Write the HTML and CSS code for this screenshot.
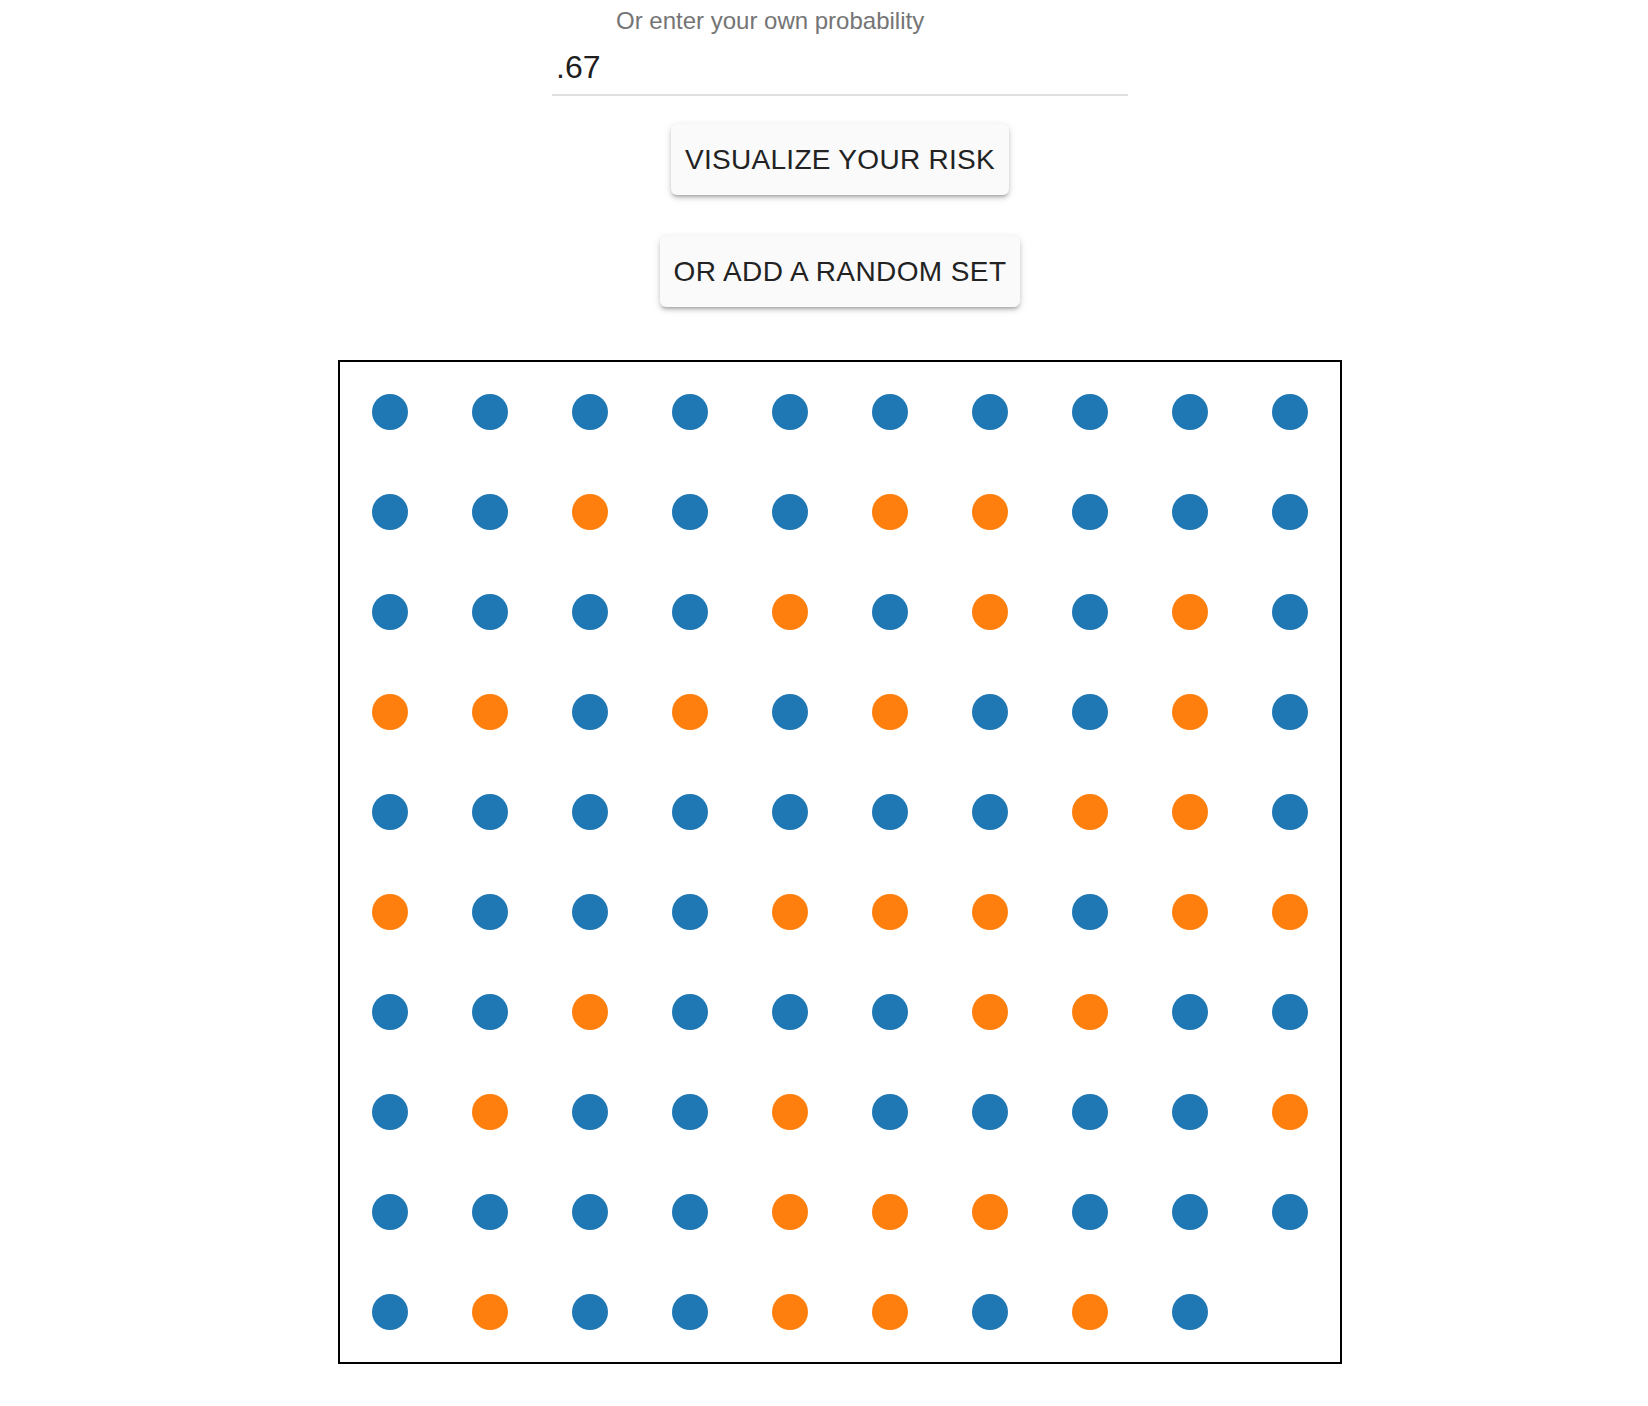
FILE: index.html
```html
<!DOCTYPE html>
<html>
<head>
<meta charset="utf-8">
<link rel="stylesheet" href="styles.css">
</head>
<body>
<div class="page">
  <div class="field">
    <div class="label">Or enter your own probability</div>
    <div class="input">.67</div>
  </div>
  <button class="btn btn-first">VISUALIZE YOUR RISK</button>
  <button class="btn btn-second">OR ADD A RANDOM SET</button>
  <svg class="grid" width="1000" height="1000" viewBox="0 0 1000 1000">
    <g class="dots" id="dots"></g>
  </svg>
</div>
<script src="app.js"></script>
</body>
</html>
```

FILE: app.js
```js
var rows = [
  "BBBBBBBBBB",
  "BBOBBOOBBB",
  "BBBBOBOBOB",
  "OOBOBOBBOB",
  "BBBBBBBOOB",
  "OBBBOOOBOO",
  "BBOBBBOOBB",
  "BOBBOBBBBO",
  "BBBBOOOBBB",
  "BOBBOOBOB"
];
var g = document.getElementById("dots");
var ns = "http://www.w3.org/2000/svg";
rows.forEach(function (row, r) {
  row.split("").forEach(function (ch, c) {
    var el = document.createElementNS(ns, "circle");
    el.setAttribute("cx", 50 + c * 100);
    el.setAttribute("cy", 50 + r * 100);
    el.setAttribute("r", 18);
    el.setAttribute("class", ch === "O" ? "dot-orange" : "dot-blue");
    g.appendChild(el);
  });
});
```

FILE: styles.css
```css
html, body {
  margin: 0;
  padding: 0;
  background: #ffffff;
}

body {
  font-family: "Liberation Sans", Arial, Helvetica, sans-serif;
  color: rgba(0, 0, 0, 0.87);
}

.page {
  padding-left: 32px;
  display: flex;
  flex-direction: column;
  align-items: center;
  padding-bottom: 40px;
}

.field {
  width: 576px;
  margin-top: 7px;
  display: flex;
  flex-direction: column;
}

.label {
  font-size: 24px;
  line-height: 28px;
  color: #757575;
  margin-left: 64px;
}

.input {
  margin-top: 14px;
  font-size: 32px;
  line-height: 36px;
  padding: 0 0 9px 4px;
  color: #1e1e1e;
  border-bottom: 2px solid #e0e0e0;
}

.btn {
  font-family: "Liberation Sans", Arial, Helvetica, sans-serif;
  font-size: 28px;
  line-height: 47px;
  letter-spacing: 0.3px;
  padding: 12px 14px;
  border: none;
  border-radius: 6px;
  background: #fafafa;
  color: #222222;
  box-shadow: 0 3px 3px -2px rgba(0, 0, 0, 0.2), 0 3px 4px 0 rgba(0, 0, 0, 0.14), 0 2px 9px 0 rgba(0, 0, 0, 0.12);
}

.btn-first {
  margin-top: 28px;
}

.btn-second {
  margin-top: 41px;
  letter-spacing: 0.4px;
}

.grid {
  margin-top: 53px;
  border: 2px solid #000000;
  display: block;
}

.dot-blue {
  fill: #1f77b4;
}

.dot-orange {
  fill: #ff7f0e;
}
```
